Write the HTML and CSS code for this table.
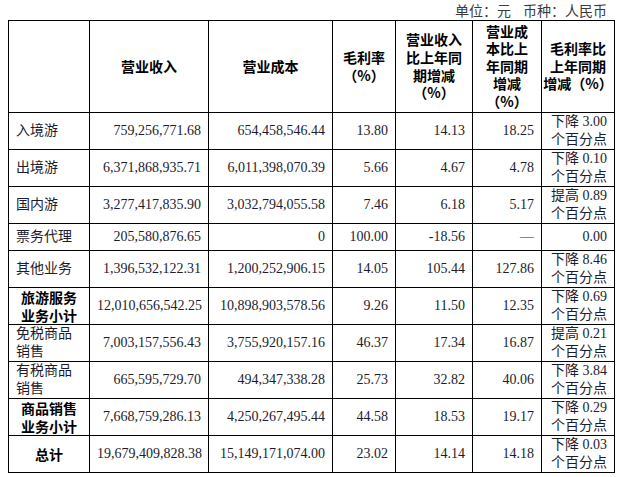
FILE: index.html
```html
<!DOCTYPE html>
<html lang="zh-CN">
<head>
<meta charset="utf-8">
<link rel="stylesheet" href="styles.css">
</head>
<body>
<div class="page">
  <div class="unit"><span>单位：元</span><span class="sep">币种：人民币</span></div>
  <table class="fin">
    <colgroup>
      <col class="c1"><col class="c2"><col class="c3"><col class="c4"><col class="c5"><col class="c6"><col class="c7">
    </colgroup>
    <thead>
      <tr class="head">
        <th></th>
        <th>营业收入</th>
        <th>营业成本</th>
        <th>毛利率<br><span class="p">（</span>%<span class="p">）</span></th>
        <th>营业收入<br>比上年同<br>期增减<br><span class="p">（</span>%<span class="p">）</span></th>
        <th>营业成<br>本比上<br>年同期<br>增减<br><span class="p">（</span>%<span class="p">）</span></th>
        <th>毛利率比<br>上年同期<br>增减<span class="p">（</span>%<span class="p">）</span></th>
      </tr>
    </thead>
    <tbody>
      <tr><td class="lbl">入境游</td><td>759,256,771.68</td><td>654,458,546.44</td><td>13.80</td><td>14.13</td><td>18.25</td><td>下降 3.00<br>个百分点</td></tr>
      <tr><td class="lbl">出境游</td><td>6,371,868,935.71</td><td>6,011,398,070.39</td><td>5.66</td><td>4.67</td><td>4.78</td><td>下降 0.10<br>个百分点</td></tr>
      <tr><td class="lbl">国内游</td><td>3,277,417,835.90</td><td>3,032,794,055.58</td><td>7.46</td><td>6.18</td><td>5.17</td><td>提高 0.89<br>个百分点</td></tr>
      <tr class="short"><td class="lbl">票务代理</td><td>205,580,876.65</td><td>0</td><td>100.00</td><td>-18.56</td><td>—</td><td>0.00</td></tr>
      <tr><td class="lbl">其他业务</td><td>1,396,532,122.31</td><td>1,200,252,906.15</td><td>14.05</td><td>105.44</td><td>127.86</td><td>下降 8.46<br>个百分点</td></tr>
      <tr><td class="lbl strong">旅游服务<br>业务小计</td><td>12,010,656,542.25</td><td>10,898,903,578.56</td><td>9.26</td><td>11.50</td><td>12.35</td><td>下降 0.69<br>个百分点</td></tr>
      <tr><td class="lbl">免税商品<br>销售</td><td>7,003,157,556.43</td><td>3,755,920,157.16</td><td>46.37</td><td>17.34</td><td>16.87</td><td>提高 0.21<br>个百分点</td></tr>
      <tr><td class="lbl">有税商品<br>销售</td><td>665,595,729.70</td><td>494,347,338.28</td><td>25.73</td><td>32.82</td><td>40.06</td><td>下降 3.84<br>个百分点</td></tr>
      <tr><td class="lbl strong">商品销售<br>业务小计</td><td>7,668,759,286.13</td><td>4,250,267,495.44</td><td>44.58</td><td>18.53</td><td>19.17</td><td>下降 0.29<br>个百分点</td></tr>
      <tr><td class="lbl strong">总计</td><td>19,679,409,828.38</td><td>15,149,171,074.00</td><td>23.02</td><td>14.14</td><td>14.18</td><td>下降 0.03<br>个百分点</td></tr>
    </tbody>
  </table>
</div>
</body>
</html>
```

FILE: styles.css
```css
html, body {
  margin: 0;
  padding: 0;
  background: #ffffff;
}

.page {
  padding: 3px 0 0 8px;
  width: 607px;
  font-family: "Liberation Serif", "Noto Sans CJK SC", serif;
  font-size: 14px;
  color: #1c1c2e;
}

.unit {
  display: flex;
  justify-content: flex-end;
  padding-right: 8px;
  height: 17px;
  line-height: 17px;
  color: #3a3a3a;
}

.unit .sep {
  margin-left: 12px;
}

.fin {
  border-collapse: collapse;
  table-layout: fixed;
  width: 607px;
}

.c1 { width: 81px; }
.c2 { width: 119px; }
.c3 { width: 124px; }
.c4 { width: 63px; }
.c5 { width: 77px; }
.c6 { width: 69px; }
.c7 { width: 73px; }

.fin th,
.fin td {
  border: 1px solid #000;
  padding: 0 7px 0 7px;
  line-height: 18px;
  vertical-align: middle;
  white-space: nowrap;
}

.fin th {
  font-family: "Noto Sans CJK SC", sans-serif;
  font-weight: 700;
  color: #000;
  text-align: center;
  padding: 0;
  line-height: 17.6px;
}

.fin th .p {
  display: inline-block;
  width: 14px;
  text-align: center;
}

.fin tr.head {
  height: 92px;
}

.fin tbody tr {
  height: 37px;
}

.fin tbody tr.short {
  height: 27px;
}

.fin td {
  text-align: right;
}

.fin td.lbl {
  text-align: left;
  padding-left: 7px;
}

.fin td.strong {
  text-align: center;
  font-family: "Noto Sans CJK SC", sans-serif;
  font-weight: 700;
  color: #000;
  padding: 0;
}
```
